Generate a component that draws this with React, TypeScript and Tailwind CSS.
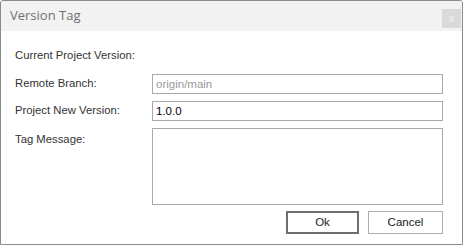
export default function App() {
  const label = "text-[11.3px] text-[#333333] leading-none";
  const input = "h-[20px] w-full border border-[#a9a9a9] bg-white px-[3px] text-[11.5px] leading-[18px] outline-none";
  return (
    <div className="h-[245px] w-[463px] bg-white" style={{ fontFamily: '"Liberation Sans", Arial, sans-serif' }}>
      <div className="flex h-full w-full flex-col overflow-hidden rounded-t-[3px] border border-[#8a8a8a] bg-white">
        <div className="flex h-[30px] shrink-0 items-center justify-between bg-[#f2f2f2] pl-[9px] pr-[1px]">
          <span className="text-[13px] text-[#707070]" style={{ fontFamily: '"Open Sans", "Noto Sans", sans-serif' }}>
            Version Tag
          </span>
          <div className="mt-[5px] flex h-[19px] w-[19px] items-center justify-center bg-[#dadada] text-[10px] leading-none text-[#f4f4f4]">
            x
          </div>
        </div>
        <div className="flex flex-col pl-[14px] pr-[19px] pt-[19px]">
          <div className={`${label} h-[14px]`}>Current Project Version:</div>
          <div className="mt-[10px] grid grid-cols-[137px_1fr] gap-y-[7px]">
            <div className={`${label} flex items-center`}>Remote Branch:</div>
            <input className={`${input} text-[#9a9a9a]`} value="origin/main" readOnly />
            <div className={`${label} flex items-center`}>Project New Version:</div>
            <input className={`${input} text-black`} value="1.0.0" readOnly />
            <div className={`${label} pt-[6px]`}>Tag Message:</div>
            <textarea className="h-[77px] w-full resize-none border border-[#a9a9a9] bg-white outline-none" readOnly />
          </div>
          <div className="mt-[6px] flex justify-end gap-[9px]">
            <button className="h-[23px] w-[73px] border-2 border-[#6e6e6e] bg-white text-[11.5px] text-[#222222]">
              Ok
            </button>
            <button className="h-[23px] w-[75px] border border-[#adadad] bg-white text-[11.5px] text-[#222222]">
              Cancel
            </button>
          </div>
        </div>
      </div>
    </div>
  );
}
